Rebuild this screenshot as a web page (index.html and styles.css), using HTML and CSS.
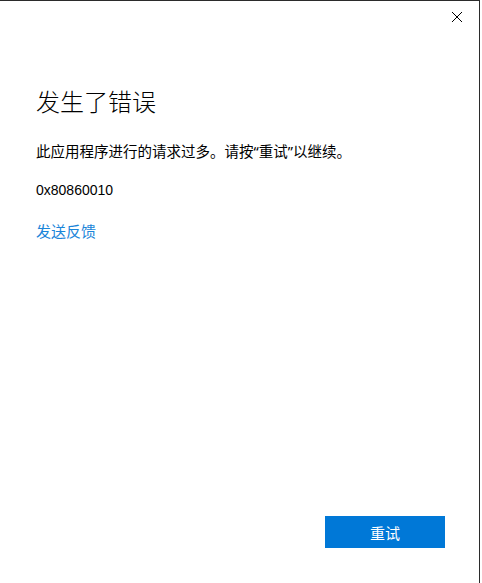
FILE: index.html
```html
<!DOCTYPE html>
<html>
	<head>
		<meta charset="UTF-8"/>
		<title>发生了错误</title>
		<link rel="stylesheet" href="styles.css">
	</head>
	<body>
		<div class="dialog">
			<div class="titlebar">
				<span class="close">
					<svg width="12" height="12" viewBox="0 0 12 12"><path d="M1 1L11 11M11 1L1 11" stroke="#000" stroke-width="1" fill="none"/></svg>
				</span>
			</div>
			<div class="content">
				<h1>发生了错误</h1>
				<p class="message">此应用程序进行的请求过多。请按<span class="q">“</span>重试<span class="q">”</span>以继续。</p>
				<p class="code">0x80860010</p>
				<a class="feedback" href="#">发送反馈</a>
			</div>
			<div class="footer">
				<button class="retry">重试</button>
			</div>
		</div>
	</body>
</html>
```

FILE: styles.css
```css
html, body{
	margin: 0;
	height: 100%;
	background: #fff;
}
body{
	font-family: "Noto Sans CJK SC", "Noto Sans", sans-serif;
	color: #000;
}
.dialog{
	box-sizing: border-box;
	width: 480px;
	height: 583px;
	border-top: 1px solid #2b2b2b;
	border-right: 1px solid #2b2b2b;
	display: flex;
	flex-direction: column;
}
.titlebar{
	height: 32px;
	display: flex;
	justify-content: flex-end;
}
.close{
	width: 46px;
	display: flex;
	align-items: center;
	justify-content: center;
}
.close svg{
	display: block;
	margin-left: 2px;
}
.content{
	flex: 1;
	padding: 52px 36px 0 36px;
}
h1{
	margin: 0;
	font-size: 24px;
	font-weight: 300;
	line-height: 32px;
}
.message{
	margin: 24px 0 0 0;
	font-size: 14.5px;
	line-height: 20px;
}
.q{
	font-family: "Noto Sans", sans-serif;
}
.code{
	margin: 19px 0 0 0;
	font-family: "Liberation Sans", sans-serif;
	font-size: 14px;
	line-height: 20px;
}
.feedback{
	display: inline-block;
	margin-top: 21px;
	font-size: 15px;
	line-height: 20px;
	color: #1a85d9;
	text-decoration: none;
}
.footer{
	display: flex;
	justify-content: flex-end;
	padding: 0 34px 35px 0;
}
.retry{
	width: 120px;
	height: 32px;
	border: none;
	background: #0078d7;
	color: #fff;
	font-family: "Noto Sans CJK SC", sans-serif;
	font-size: 15px;
	padding: 0;
}
```
